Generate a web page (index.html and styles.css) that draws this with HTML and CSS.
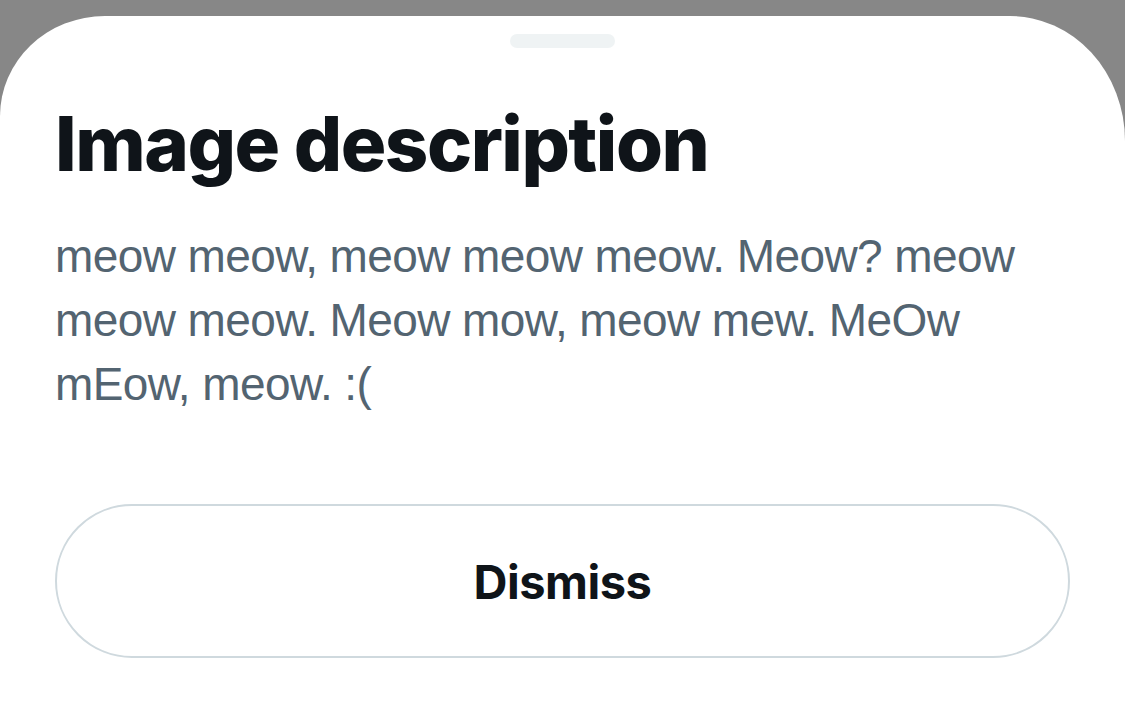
FILE: index.html
```html
<!DOCTYPE html>
<html>
<head>
<meta charset="utf-8">
<link rel="stylesheet" href="styles.css">
</head>
<body>
<div class="screen">
  <div class="sheet">
    <div class="handle"></div>
    <h1 class="title">Image description</h1>
    <p class="desc">meow meow, meow meow meow. Meow? meow meow meow. Meow mow, meow mew. MeOw mEow, meow. :(</p>
    <button class="dismiss">Dismiss</button>
  </div>
</div>
</body>
</html>
```
FILE: styles.css
```css
html, body {
  margin: 0;
  padding: 0;
  background: #878787;
}
.screen {
  width: 1125px;
  height: 705px;
  overflow: hidden;
  padding-top: 16px;
  box-sizing: border-box;
}
.sheet {
  width: 1125px;
  height: 689px;
  background: #ffffff;
  border-top-left-radius: 105px 100px;
  border-top-right-radius: 115px 125px;
  padding: 18px 55px 0 55px;
  box-sizing: border-box;
  display: flex;
  flex-direction: column;
  font-family: "Inter", "Liberation Sans", sans-serif;
}
.handle {
  align-self: center;
  width: 105px;
  height: 14px;
  border-radius: 7px;
  background: #eff3f4;
}
.title {
  margin: 50px 0 0 0;
  font-size: 76px;
  line-height: 90px;
  font-weight: 800;
  color: #0f1419;
  letter-spacing: -1.5px;
}
.desc {
  margin: 36px 0 0 0;
  font-family: "Liberation Sans", Arial, sans-serif;
  font-size: 46px;
  line-height: 64px;
  letter-spacing: -0.6px;
  color: #536471;
  font-weight: 400;
  width: 990px;
}
.dismiss {
  margin-top: 88px;
  width: 1015px;
  height: 154px;
  border: 2px solid #cfd9de;
  border-radius: 77px;
  background: #ffffff;
  font-family: "Inter", "Liberation Sans", sans-serif;
  font-size: 47px;
  font-weight: 700;
  letter-spacing: -0.5px;
  color: #0f1419;
  padding: 0;
}
```
